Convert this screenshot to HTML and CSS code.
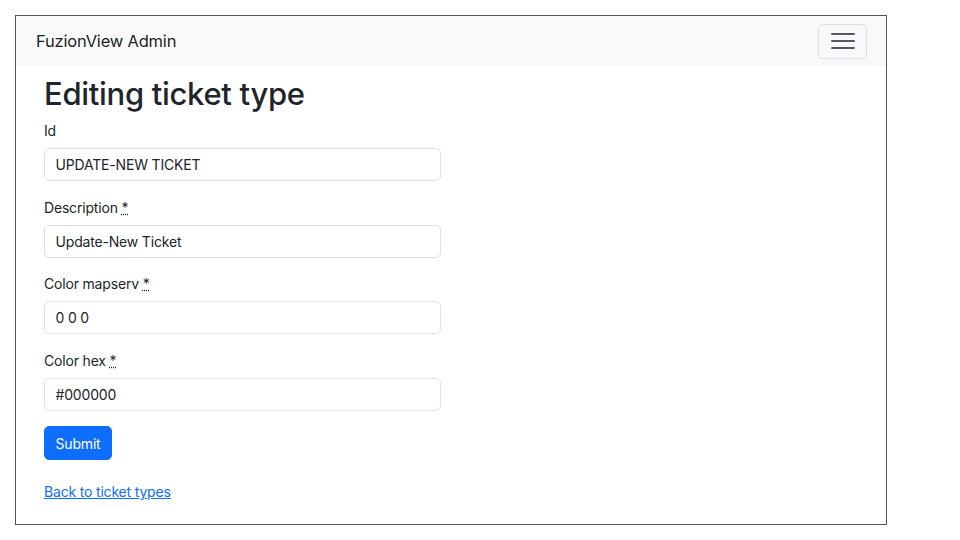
FILE: index.html
```html
<!DOCTYPE html>
<html lang="en">
<head>
<meta charset="utf-8">
<title>FuzionView Admin</title>
<link rel="stylesheet" href="styles.css">
</head>
<body>
<div class="frame">
  <nav class="navbar">
    <a class="brand" href="#">FuzionView Admin</a>
    <button class="toggler" type="button" aria-label="Toggle navigation">
      <svg width="24" height="18" viewBox="0 0 24 18" aria-hidden="true">
        <path d="M1 2h22M1 9h22M1 16h22" stroke="rgba(33,37,41,0.75)" stroke-width="2" stroke-linecap="round" fill="none"/>
      </svg>
    </button>
  </nav>
  <main class="content">
    <h1 class="title">Editing ticket type</h1>
    <form class="form">
      <div class="field">
        <label class="label">Id</label>
        <input class="input" type="text" value="UPDATE-NEW TICKET">
      </div>
      <div class="field">
        <label class="label">Description <abbr class="req" title="required">*</abbr></label>
        <input class="input" type="text" value="Update-New Ticket">
      </div>
      <div class="field">
        <label class="label">Color mapserv <abbr class="req" title="required">*</abbr></label>
        <input class="input" type="text" value="0 0 0">
      </div>
      <div class="field">
        <label class="label">Color hex <abbr class="req" title="required">*</abbr></label>
        <input class="input" type="text" value="#000000">
      </div>
      <button class="btn" type="button">Submit</button>
    </form>
    <p class="back"><a class="link" href="#">Back to ticket types</a></p>
  </main>
</div>
</body>
</html>
```
FILE: styles.css
```css
* { box-sizing: border-box; }
html, body { margin: 0; padding: 0; background: #fff; }
body {
  font-family: Inter, "Noto Sans", "Liberation Sans", sans-serif;
  font-size: 14px;
  line-height: 21px;
  letter-spacing: -0.18px;
  color: #212529;
}
.frame {
  margin: 15px 0 0 15px;
  width: 872px;
  height: 510px;
  border: 1px solid #555;
  overflow: hidden;
}
.navbar {
  height: 50px;
  background: #f8f9fa;
  display: flex;
  align-items: center;
  justify-content: space-between;
  padding: 0 19px 0 20px;
}
.brand {
  font-size: 16.5px;
  letter-spacing: -0.2px;
  color: rgba(0,0,0,0.9);
  text-decoration: none;
  line-height: 26px;
}
.toggler {
  width: 49px;
  height: 35px;
  padding: 0;
  border: 1px solid rgba(0,0,0,0.1);
  border-radius: 5px;
  background: transparent;
  display: flex;
  align-items: center;
  justify-content: center;
}
.toggler svg { display: block; }
.content {
  padding: 0 28px;
}
.title {
  font-size: 31px;
  font-weight: 500;
  line-height: 37px;
  margin: 9px 0 8px;
  letter-spacing: -0.3px;
}
.form { margin: 0; }
.field { margin-bottom: 15.5px; }
.label {
  display: block;
  margin-bottom: 7px;
}
.req {
  text-decoration: underline dotted;
  cursor: help;
}
.input {
  display: block;
  width: 397px;
  height: 33px;
  padding: 0 10.5px;
  font-family: inherit;
  font-size: 14px;
  letter-spacing: -0.18px;
  color: #212529;
  background: #fff;
  border: 1px solid #dee2e6;
  border-radius: 5px;
}
.btn {
  display: block;
  height: 34px;
  padding: 0 10.5px;
  font-family: inherit;
  font-size: 14px;
  letter-spacing: -0.18px;
  color: #fff;
  background: #0d6efd;
  border: 1px solid #0d6efd;
  border-radius: 5px;
}
.back { margin: 21px 0 0; }
.link { color: #0d6efd; text-decoration: underline; }
```
